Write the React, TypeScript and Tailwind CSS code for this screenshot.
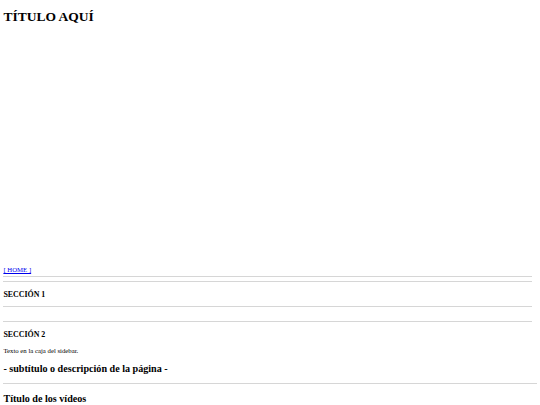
import React from "react";

const serif = { fontFamily: '"Liberation Serif", "Times New Roman", serif' };

function Rule({ wide = false, mt }: { wide?: boolean; mt: string }) {
  return (
    <div
      className={`${mt} h-[1px] bg-[#d6d6d6] ${wide ? "w-[534px]" : "w-[529px]"}`}
    />
  );
}

export default function App() {
  return (
    <div
      className="w-[540px] h-[405px] overflow-hidden bg-white text-black pl-[3.4px] flex flex-col"
      style={serif}
    >
      <h1 className="mt-[9px] text-[13.5px] leading-[15.5px] font-bold">TÍTULO AQUÍ</h1>
      <a
        href="#"
        className="mt-[241.2px] text-[6.75px] leading-[7.76px] text-[#0000ee] underline self-start"
      >
        [ HOME ]
      </a>
      <Rule mt="mt-[2.5px]" />
      <Rule mt="mt-[4px]" />
      <h3 className="mt-[8.2px] text-[7.9px] leading-[9.07px] font-bold">SECCIÓN 1</h3>
      <Rule mt="mt-[6.7px]" />
      <Rule mt="mt-[14px]" />
      <h3 className="mt-[8.4px] text-[7.9px] leading-[9.07px] font-bold">SECCIÓN 2</h3>
      <p className="mt-[7.9px] text-[6.75px] leading-[7.76px]">Texto en la caja del sidebar.</p>
      <h2 className="mt-[8.4px] text-[10.125px] leading-[11.6px] font-bold">
        - subtítulo o descripción de la página -
      </h2>
      <Rule wide mt="mt-[7.8px]" />
      <h2 className="mt-[8.9px] text-[10.125px] leading-[11.6px] font-bold">Título de los vídeos</h2>
    </div>
  );
}
